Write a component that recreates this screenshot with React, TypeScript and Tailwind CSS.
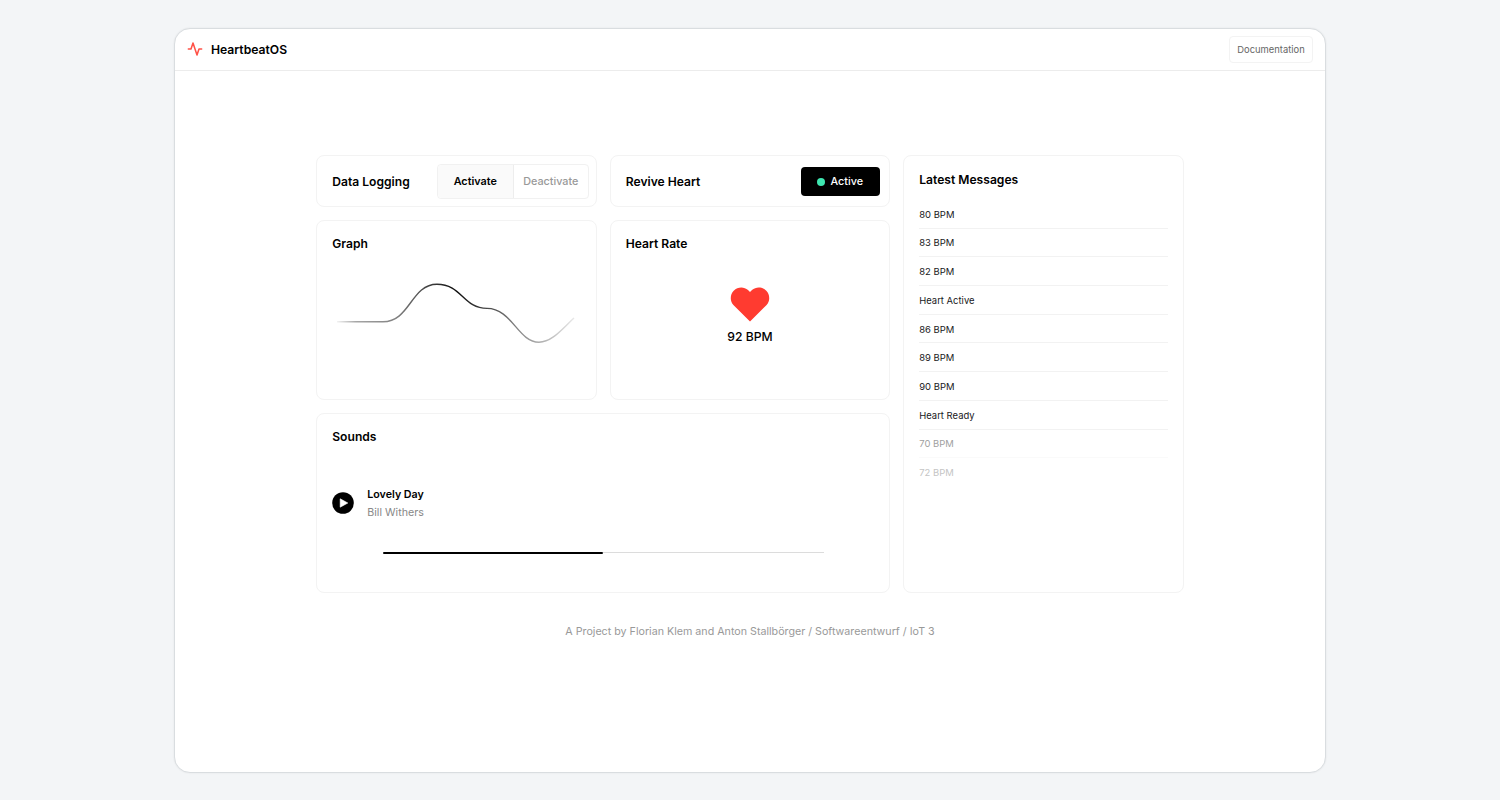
import type { ReactNode } from "react";

const messages = [
  { text: "80 BPM", tone: "text-[#18181b]" },
  { text: "83 BPM", tone: "text-[#18181b]" },
  { text: "82 BPM", tone: "text-[#18181b]" },
  { text: "Heart Active", tone: "text-[#18181b]" },
  { text: "86 BPM", tone: "text-[#18181b]" },
  { text: "89 BPM", tone: "text-[#18181b]" },
  { text: "90 BPM", tone: "text-[#18181b]" },
  { text: "Heart Ready", tone: "text-[#18181b]" },
  { text: "70 BPM", tone: "text-[#a0a0a0]" },
  { text: "72 BPM", tone: "text-[#c4c4c4]" },
];

function Card({ className, children }: { className: string; children: ReactNode }) {
  return <section className={`rounded-lg border border-[#f3f3f3] bg-white ${className}`}>{children}</section>;
}

function Title({ children }: { children: ReactNode }) {
  return <h2 className="text-[12.1px] leading-4 font-semibold text-black">{children}</h2>;
}

function Header() {
  return (
    <header className="flex h-[42px] items-center justify-between border-b border-[#ececec] px-3">
      <div className="flex items-center gap-2">
        <svg width="16" height="16" viewBox="0 0 24 24" fill="none" stroke="#ff5247" strokeWidth="2.3" strokeLinecap="round" strokeLinejoin="round">
          <path d="M22 12h-4l-3 9L9 3l-3 9H2" />
        </svg>
        <span className="pt-px text-[12.15px] leading-4 font-semibold text-black">HeartbeatOS</span>
      </div>
      <button className="flex h-[27px] w-[84px] items-center justify-center rounded border border-[#f3f3f3] pt-[2px] text-[9.4px] text-[#666]">
        Documentation
      </button>
    </header>
  );
}

function Graph() {
  return (
    <svg className="mt-[22px] block" width="248" height="80" viewBox="332 274 248 80" fill="none">
      <defs>
        <linearGradient id="trace" gradientUnits="userSpaceOnUse" x1="337" y1="0" x2="576" y2="0">
          <stop offset="0" stopColor="#000" stopOpacity="0.05" />
          <stop offset="0.08" stopColor="#000" stopOpacity="0.35" />
          <stop offset="0.25" stopColor="#000" stopOpacity="0.5" />
          <stop offset="0.5" stopColor="#000" stopOpacity="0.95" />
          <stop offset="0.8" stopColor="#000" stopOpacity="0.4" />
          <stop offset="1" stopColor="#000" stopOpacity="0.08" />
        </linearGradient>
      </defs>
      <path
        d="M337 321.8H383C410 321.8 411 284.3 437 284.3C462 284.3 463 308.4 487 308.4C512 308.4 518 342.2 539 342.2C552 342.2 562 329 574 318"
        stroke="url(#trace)"
        strokeWidth="1.4"
      />
    </svg>
  );
}

export default function App() {
  return (
    <main className="flex h-[800px] w-full items-center justify-center bg-[#f3f5f7] font-['Inter',sans-serif]">
      <div className="flex h-[745px] w-[1152px] flex-col rounded-2xl border border-[#d9dde0] bg-white shadow-[0_0_2px_rgba(0,0,0,0.08)]">
        <Header />
        <div className="flex flex-col items-center pt-[84.5px]">
          <div className="grid grid-cols-[280.5px_280.5px_280.5px] grid-rows-[51.5px_180.5px_180px] gap-[13px]">
            <Card className="flex items-center justify-between pt-[1.5px] pr-[7px] pl-[15px]">
              <div className="pt-px">
                <Title>Data Logging</Title>
              </div>
              <div className="flex h-[35px] w-[152px] rounded border border-[#f1f1f1] text-[10.8px]">
                <button className="flex w-[76px] items-center justify-center rounded-l border-r border-[#ededed] bg-[#fafafa] pt-px font-semibold text-black">
                  Activate
                </button>
                <button className="flex flex-1 items-center justify-center pt-px font-medium text-[#999]">Deactivate</button>
              </div>
            </Card>
            <Card className="flex items-center justify-between pt-[1.5px] pr-[9px] pl-[15px]">
              <div className="pt-px">
                <Title>Revive Heart</Title>
              </div>
              <button className="flex h-[29px] w-[79px] items-center justify-center gap-[5px] rounded bg-black pr-px text-[10.8px] font-medium text-white">
                <span className="size-2 rounded-full bg-[#3ee6b0]" />
                <span className="pt-px">Active</span>
              </button>
            </Card>
            <Card className="row-span-3 px-[15px] pt-[15.5px]">
              <Title>Latest Messages</Title>
              <ul className="mt-[12.5px]">
                {messages.map((m) => (
                  <li
                    key={m.text}
                    className={`flex h-[28.7px] items-center border-b border-[#f2f2f2] pt-[2px] text-[9.45px] last:border-transparent nth-9:border-[#fafafa] ${m.tone}`}
                  >
                    {m.text}
                  </li>
                ))}
              </ul>
            </Card>
            <Card className="px-[15px] pt-[15.5px]">
              <Title>Graph</Title>
              <Graph />
            </Card>
            <Card className="px-[15px] pt-[15.5px]">
              <Title>Heart Rate</Title>
              <div className="mt-[35px] flex flex-col items-center">
                <svg width="40" height="35" viewBox="0 0 40 35">
                  <path
                    d="M20 34.5L3.4 17.9C-.4 14 .1 7.4 3.7 3.8C7.8-.3 13.9-.5 18 3.1L20 5L22 3.1C26.1-.5 32.2-.3 36.3 3.8C39.9 7.4 40.4 14 36.6 17.9Z"
                    fill="#ff3b30"
                  />
                </svg>
                <span className="mt-[5px] text-[12.2px] leading-5 font-medium text-black">92 BPM</span>
              </div>
            </Card>
            <Card className="col-span-2 px-[15px] pt-[15px]">
              <Title>Sounds</Title>
              <div className="mt-[39.5px] flex items-center gap-[13px]">
                <svg width="22" height="22" viewBox="0 0 22 22">
                  <circle cx="11" cy="11" r="10.8" fill="#000" />
                  <path d="M8.2 6.8V15.2L15.8 11Z" fill="#fff" stroke="#fff" strokeWidth="0.6" strokeLinejoin="round" />
                </svg>
                <div className="pt-[1.5px] text-[10.7px] leading-[18px]">
                  <p className="font-semibold text-black">Lovely Day</p>
                  <p className="text-[#888]">Bill Withers</p>
                </div>
              </div>
              <div className="mt-[29.5px] ml-[51px] flex w-[441px] items-center">
                <div className="h-[2px] w-[220px] rounded-full bg-black" />
                <div className="h-px flex-1 bg-[#dcdcdc]" />
              </div>
            </Card>
          </div>
          <footer className="mt-[31px] text-[10.7px] leading-4 text-[#999]">
            A Project by Florian Klem and Anton Stallbörger / Softwareentwurf / IoT 3
          </footer>
        </div>
      </div>
    </main>
  );
}
